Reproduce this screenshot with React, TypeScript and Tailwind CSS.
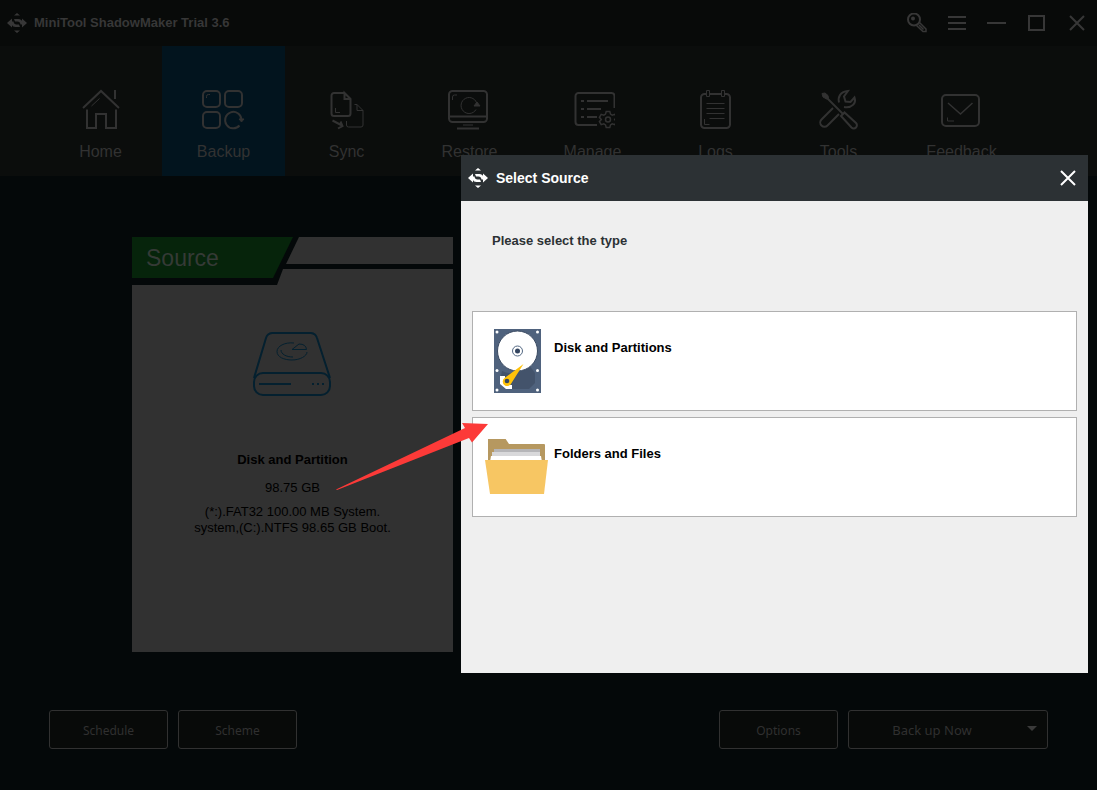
import type { ReactNode } from "react";

type IconProps = { className?: string };

function LogoIcon({ className }: IconProps) {
  return (
    <svg viewBox="0 0 20 20" className={className} fill="currentColor" aria-hidden="true">
      <path d="M10 0l3 2.500H7zM10 20l3-2.500H7z" />
      <path d="M0 10l5-4.500V8.500h1.500c.3 2 1.300 3 3 3H12l1 2.500H8.500C6.500 14 5.500 13 5 12v2.500z" />
      <path d="M20 10l-5 4.500V11.500h-1.500c-.3-2-1.300-3-3-3H8L7 6h4.500C13.500 6 14.500 7 15 8V5.500z" />
    </svg>
  );
}

function NavSvg({ children }: { children: ReactNode }) {
  return (
    <svg
      viewBox="0 0 44 44"
      className="size-11"
      fill="none"
      stroke="currentColor"
      strokeWidth="2"
      aria-hidden="true"
    >
      {children}
    </svg>
  );
}

function HomeIcon() {
  return (
    <NavSvg>
      <path d="M4 20L22 3l18 17M36 2v9M8 21.500V40h9V26h10v14h10V21.500" />
      <path d="M12.500 18l8-7.500" strokeWidth="1" />
    </NavSvg>
  );
}

function BackupIcon() {
  return (
    <NavSvg>
      <rect x="1" y="3" width="17" height="16" rx="4" />
      <rect x="23" y="3" width="17" height="16" rx="4" />
      <rect x="1" y="24" width="17" height="16" rx="4" />
      <path d="M37.500 37.500a8.200 8.200 0 1 1 2-6" />
      <path d="M37 31h5l-2.500 3z" fill="currentColor" strokeWidth="1" />
      <path d="M4.500 10V8.500A2 2 0 0 1 6.500 6.500H8" strokeWidth="1" />
    </NavSvg>
  );
}

function SyncIcon() {
  return (
    <NavSvg>
      <path d="M19 5H9a2.500 2.500 0 0 0-2.500 2.500v18A2.500 2.500 0 0 0 9 28h14a2.500 2.500 0 0 0 2.500-2.500V11l-6-6v6h6" />
      <path
        d="M10.500 20v4.500H15M29.500 16.500H32l6 6v14.500a2 2 0 0 1-2 2H23.500a2 2 0 0 1-2-2V33M32 16.500v6h6"
        strokeWidth="1"
      />
      <path d="M7.500 32.500l9.500 5M13 40.500l4.500-2.500-2-4.500" strokeWidth="2" />
    </NavSvg>
  );
}

function RestoreIcon() {
  return (
    <NavSvg>
      <rect x="1" y="3" width="38" height="31" rx="3.500" />
      <path d="M1 28.500h38M9 40.500h22" />
      <path d="M15 37h10" strokeWidth="1" />
      <path d="M28 21.500a8 8 0 1 1 1-5" strokeWidth="1" />
      <path d="M26 18h6l-3-4z" fill="currentColor" strokeWidth="1" />
      <path d="M4.500 12V9A2 2 0 0 1 6.500 7H9" strokeWidth="1" />
    </NavSvg>
  );
}

function ManageIcon() {
  return (
    <NavSvg>
      <path d="M26 37H7.500A3 3 0 0 1 4.500 34V8a3 3 0 0 1 3-3h33a3 3 0 0 1 3 3v12M10 13h3M16 13h21M10 21h3M16 21h14M10 29h3M16 29h10" />
      <circle cx="37" cy="31.500" r="2.500" strokeWidth="1.500" />
      <path
        d="M35.200 23.500h3.600l.7 2.600 1.700 1 2.600-.8 1.800 3-1.900 2.200 1.900 2.200-1.800 3-2.600-.8-1.700 1-.7 2.600h-3.600l-.7-2.600-1.700-1-2.600.8-1.800-3 1.900-2.200-1.900-2.200 1.800-3 2.600.8 1.700-1z"
        strokeWidth="1.500"
      />
    </NavSvg>
  );
}

function LogsIcon() {
  return (
    <NavSvg>
      <path d="M12 6h-1.500A3.500 3.500 0 0 0 7 9.500v27a3.500 3.500 0 0 0 3.500 3.500h22a3.500 3.500 0 0 0 3.500-3.500v-27A3.500 3.500 0 0 0 32.500 6H31M15 6h12" />
      <path
        d="M12.500 2.500h3v6h-3zM27.500 2.500h3v6h-3zM12.500 15.500h18M12.500 20.500h18M12.500 25.500h18M15.500 30.500h15M10.500 31v5.500h5"
        strokeWidth="1"
      />
    </NavSvg>
  );
}

function ToolsIcon() {
  return (
    <NavSvg>
      <path d="M9 9L26 26" />
      <path d="M5 5.500l3-.5 3 2.500.5 3-2 .5-3.500-2z" fill="currentColor" strokeWidth="1" />
      <path d="M24 28l3.500-3.500L39 35a3 3 0 0 1-4.500 4.500z" />
      <path d="M16 20L4.500 31.500a4.200 4.200 0 0 0 6 6L22 26M22 14.500C20.500 9 23.500 3.500 31 3l-4 5.500 1.500 5 5 .5 4-4.500C39.500 15 35 20.500 27 19" />
    </NavSvg>
  );
}

function FeedbackIcon() {
  return (
    <NavSvg>
      <rect x="2" y="7" width="37" height="31" rx="4" />
      <path d="M8 15l12.500 11L32.500 15" strokeWidth="1.500" />
      <path d="M7.500 29.500V33H14" strokeWidth="1" />
    </NavSvg>
  );
}

const navItems = [
  { label: "Home", icon: <HomeIcon /> },
  { label: "Backup", icon: <BackupIcon />, active: true },
  { label: "Sync", icon: <SyncIcon /> },
  { label: "Restore", icon: <RestoreIcon /> },
  { label: "Manage", icon: <ManageIcon /> },
  { label: "Logs", icon: <LogsIcon /> },
  { label: "Tools", icon: <ToolsIcon /> },
  { label: "Feedback", icon: <FeedbackIcon /> },
];

function TitleBar() {
  return (
    <header className="flex h-[46px] items-center justify-between bg-[#080a09] pl-[7px] pr-[10px] text-[#373737]">
      <div className="flex items-center gap-[7px]">
        <LogoIcon className="size-5" />
        <h1 className="text-[13px] font-bold">MiniTool ShadowMaker Trial 3.6</h1>
      </div>
      <div className="flex items-center gap-5">
        <button type="button" aria-label="Register">
          <svg viewBox="0 0 20 20" className="size-5" fill="none" stroke="currentColor" strokeWidth="2">
            <circle cx="7" cy="6.500" r="6" />
            <circle cx="6" cy="5.500" r="2" fill="currentColor" stroke="none" />
            <path d="M12.500 9.500l6.500 6.500v2.500h-3L9.500 12.500M12 12l4.500 4.500" strokeWidth="1.500" />
          </svg>
        </button>
        <button type="button" aria-label="Menu">
          <svg viewBox="0 0 20 20" className="size-5" stroke="currentColor" strokeWidth="2">
            <path d="M1 4h18M1 10h18M1 16h18" />
          </svg>
        </button>
        <button type="button" aria-label="Minimize">
          <svg viewBox="0 0 20 20" className="size-5" stroke="currentColor" strokeWidth="2">
            <path d="M0 10h19" />
          </svg>
        </button>
        <button type="button" aria-label="Maximize">
          <svg viewBox="0 0 20 20" className="size-5" fill="none" stroke="currentColor" strokeWidth="2">
            <path d="M2 3h15v14H2z" />
          </svg>
        </button>
        <button type="button" aria-label="Close">
          <svg viewBox="0 0 20 20" className="size-5" stroke="currentColor" strokeWidth="2">
            <path d="M3 3l14 14M17 3L3 17" />
          </svg>
        </button>
      </div>
    </header>
  );
}

function SourceCard() {
  return (
    <section className="flex h-[415px] w-[321px] flex-col">
      <div className="flex h-8 shrink-0 items-start">
        <h2 className="h-[41px] w-[161px] shrink-0 bg-[#06240b] pl-[14px] text-[23px] leading-[42px] text-[#353a36] [clip-path:polygon(0_0,100%_0,141px_100%,0_100%)]">
          Source
        </h2>
        <div className="-ml-[7px] h-[27px] flex-1 bg-[#313131] [clip-path:polygon(13px_0,100%_0,100%_100%,0_100%)]" />
      </div>
      <div className="flex flex-1 flex-col items-center bg-[#313131] pt-[61px] text-center text-[13px] leading-4 text-black [clip-path:polygon(151px_0,100%_0,100%_100%,0_100%,0_16px,145px_16px)]">
        <svg
          viewBox="1 0 80 66"
          className="h-[66px] w-20"
          fill="none"
          stroke="#04202f"
          strokeWidth="2"
          aria-hidden="true"
        >
          <path d="M2 48L14 8a7 7 0 0 1 6-5h39a7 7 0 0 1 6 5l13 40" />
          <rect x="2" y="43" width="76" height="22" rx="9" />
          <path d="M7 54h32M60 54h2M65 54h2M70 54h2" />
          <path
            d="M42 13c-9-1-17 3-17 8.500S32 30 40 30s15-4 15-8M29 20c0 4 5 7 12 7M40 19.500L47 14q7 0 7.500 5.500z"
            strokeWidth="1"
          />
        </svg>
        <h3 className="mt-14 font-bold">Disk and Partition</h3>
        <p className="mt-3">98.75 GB</p>
        <p className="mt-2">
          (*:).FAT32 100.00 MB System.
          <br />
          system,(C:).NTFS 98.65 GB Boot.
        </p>
      </div>
    </section>
  );
}

function DiskIcon() {
  return (
    <svg viewBox="0 0 47 64" className="h-16 w-[47px]" aria-hidden="true">
      <path fill="#4f627d" d="M0 0h47v64H0z" />
      <path fill="#43536b" d="M8 42q15 7 27-6l6 8v10l-6 6H16L6 52z" />
      <circle cx="23.500" cy="22" r="20" fill="#fff" stroke="#3a4a62" />
      <circle cx="23.500" cy="22" r="5" fill="#fff" stroke="#536883" />
      <circle cx="23.500" cy="22" r="2.500" fill="#34455f" />
      <path fill="#fff" d="M6 47h5v7l3 2h4v4h-6l-6-5z" />
      <path fill="#ffc20a" d="M29.500 35L17.500 54a4.500 4.500 0 1 1-7-5z" />
      <circle cx="13" cy="52" r="2.300" fill="#34455f" />
      <g fill="#fff">
        <circle cx="3" cy="3" r="1.500" />
        <circle cx="43.500" cy="3" r="1.500" />
        <circle cx="3" cy="41.500" r="1.500" />
        <circle cx="43.500" cy="41.500" r="1.500" />
        <circle cx="3" cy="61" r="1.500" />
        <circle cx="43.500" cy="61" r="1.500" />
      </g>
    </svg>
  );
}

function FolderIcon() {
  return (
    <svg viewBox="1 1 64 56" className="h-14 w-16" aria-hidden="true">
      <path fill="#b69860" d="M4 0h17l4 6h35q1 0 1 1v20H4z" />
      <path fill="#b5b5b8" d="M10 11h46v10H10z" />
      <path fill="#d8d8da" d="M8 14h48v8H8z" />
      <path fill="#fff" d="M7 18h50l1 6H6z" />
      <path fill="#f7c663" d="M1 22h63l-4 34H6z" />
    </svg>
  );
}

const sourceTypes = [
  { label: "Disk and Partitions", icon: <DiskIcon /> },
  { label: "Folders and Files", icon: <FolderIcon /> },
];

function SelectSourceDialog() {
  return (
    <div className="absolute inset-0 flex items-start justify-end pr-[9px] pt-[155px]">
      <div
        role="dialog"
        aria-labelledby="select-source-title"
        className="min-h-[518px] w-[627px] bg-[#efefef]"
      >
        <div className="flex h-[46px] items-center justify-between bg-[#2c3134] pl-[7px] pr-[10px] text-white">
          <div className="flex items-center gap-2">
            <LogoIcon className="size-5" />
            <h2 id="select-source-title" className="text-[14px] font-bold">
              Select Source
            </h2>
          </div>
          <button type="button" aria-label="Close dialog">
            <svg viewBox="0 0 20 20" className="size-5" stroke="currentColor" strokeWidth="2">
              <path d="M3 3l14 14M17 3L3 17" />
            </svg>
          </button>
        </div>
        <p className="pl-[31px] pt-8 text-[13px] font-bold leading-4 text-[#2c3134]">
          Please select the type
        </p>
        <div className="mt-[62px] flex flex-col gap-[6px] px-[11px]">
          {sourceTypes.map((type) => (
            <button
              key={type.label}
              type="button"
              className="flex h-[100px] items-start border border-[#b0b0b0] bg-white pl-3 text-left"
            >
              <span className="flex h-[98px] w-16 items-center justify-center">{type.icon}</span>
              <span className="pl-[5px] pt-7 text-[13px] font-bold leading-4 text-black">
                {type.label}
              </span>
            </button>
          ))}
        </div>
      </div>
    </div>
  );
}

function FooterButton({ children }: { children: ReactNode }) {
  return (
    <button
      type="button"
      className="h-[39px] w-[119px] rounded-[3px] border border-[#313131] bg-[#080a09] pt-[2px]"
    >
      {children}
    </button>
  );
}

export default function App() {
  return (
    <div className="relative flex min-h-screen flex-col bg-[#040809] font-['Liberation_Sans',Arial,sans-serif]">
      <TitleBar />
      <nav className="flex h-[130px] bg-[#0b0d0c] pl-[39px] text-[#323232]">
        {navItems.map((item) => (
          <a
            key={item.label}
            href="#"
            className={
              item.active
                ? "flex w-[123px] flex-col items-center gap-[9px] bg-[#02141e] pt-[42px]"
                : "flex w-[123px] flex-col items-center gap-[9px] pt-[42px]"
            }
          >
            {item.icon}
            <span className="text-[16px] leading-[22px]">{item.label}</span>
          </a>
        ))}
      </nav>
      <main className="flex-1 pl-[132px] pt-[61px]">
        <SourceCard />
      </main>
      <footer className="flex justify-between px-[49px] pb-[41px] font-['Noto_Sans',sans-serif] text-[12px] text-[#303030]">
        <div className="flex gap-[10px]">
          <FooterButton>Schedule</FooterButton>
          <FooterButton>Scheme</FooterButton>
        </div>
        <div className="flex gap-[10px]">
          <FooterButton>Options</FooterButton>
          <button
            type="button"
            className="flex h-[39px] w-[200px] items-center rounded-[3px] border border-[#313131] bg-[#080a09] pr-[10px] text-[13px]"
          >
            <span className="flex-1 pr-3 pt-[2px]">Back up Now</span>
            <svg viewBox="0 0 10 8" className="h-2 w-[10px]" fill="#3a3a3a" aria-hidden="true">
              <path d="M0 0h10L5 5z" />
            </svg>
          </button>
        </div>
      </footer>
      <SelectSourceDialog />
      <svg
        viewBox="0 0 152 68"
        className="pointer-events-none absolute left-[336px] top-[422px] h-[68px] w-[152px]"
        aria-hidden="true"
      >
        <path fill="#fc3a38" d="M0 67.500L129 6l-3-5 26 1-16 18.500-3-4.500L1 68z" />
      </svg>
    </div>
  );
}
